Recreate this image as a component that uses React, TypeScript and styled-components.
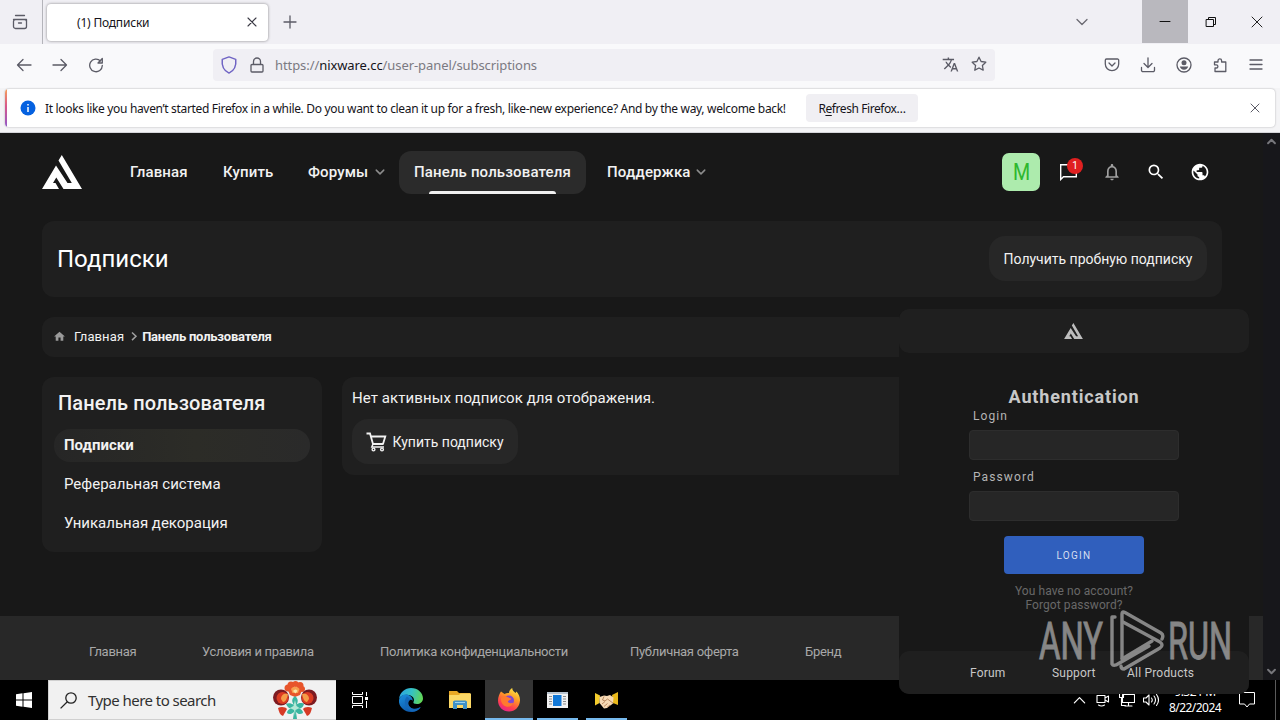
import React from "react";
import styled, { createGlobalStyle } from "styled-components";
import {
  MdHome,
  MdNotificationsNone,
  MdPublic,
  MdSearch,
  MdTranslate,
} from "react-icons/md";

const GlobalStyle = createGlobalStyle`
  * {
    box-sizing: border-box;
  }
  body {
    margin: 0;
    overflow: hidden;
    background: #000;
  }
  svg {
    display: block;
    flex: none;
  }
`;

const uiFont = `"Noto Sans", "Open Sans", sans-serif`;
const siteFont = `Roboto, "Liberation Sans", sans-serif`;

const Screen = styled.div`
  position: relative;
  display: flex;
  flex-direction: column;
  width: 1280px;
  height: 720px;
  overflow: hidden;
  white-space: nowrap;
  font-family: ${siteFont};
`;

/* ---------- browser ---------- */

const TabStrip = styled.div`
  display: flex;
  align-items: center;
  height: 44px;
  background: #f0eff4;
  font-family: ${uiFont};
  color: #15141a;
`;

const RecentButton = styled.div`
  display: flex;
  align-items: center;
  justify-content: center;
  width: 43px;
  height: 44px;
  padding-right: 3px;
  border-right: 1px solid #b4b4ba;
`;

const Tab = styled.div`
  display: flex;
  align-items: center;
  justify-content: space-between;
  width: 221px;
  height: 37px;
  margin-left: 4px;
  padding: 0 8px 0 30px;
  border-radius: 4px;
  background: #fff;
  box-shadow: 0 0 3px rgba(0, 0, 0, 0.45);
  font-size: 12px;
  letter-spacing: -0.2px;
`;

const NewTab = styled.div`
  margin-left: 14px;
`;

const WindowButtons = styled.div`
  display: flex;
  align-self: stretch;
  margin-left: auto;
`;

const WindowButton = styled.div<{ $active?: boolean; $width?: number }>`
  display: flex;
  align-items: center;
  justify-content: center;
  width: ${(p) => p.$width || 46}px;
  height: 43px;
  background: ${(p) => (p.$active ? "#b9b8be" : "transparent")};
`;

const NavBar = styled.div`
  display: flex;
  align-items: center;
  height: 44px;
  padding: 0 16px 3px;
  background: #f9f9fb;
`;

const NavButtons = styled.div`
  display: flex;
  gap: 20px;
  width: 197px;
`;

const UrlBar = styled.div`
  display: flex;
  align-items: center;
  width: 782px;
  height: 32px;
  padding: 0 8px 0 7px;
  border-radius: 4px;
  background: #f0eff4;
`;

const Url = styled.div`
  flex: 1;
  margin-left: 7px;
  font-family: ${uiFont};
  font-size: 13px;
  letter-spacing: -0.08px;
  color: #7b7a82;
  b {
    font-weight: 400;
    color: #15141a;
  }
`;

const UrlIcons = styled.div`
  display: flex;
  gap: 12px;
`;

const ToolIcons = styled.div`
  display: flex;
  gap: 20px;
  margin-left: auto;
`;

const NoticeBar = styled.div`
  height: 45px;
  padding: 1px 5px 0;
  background: #f4f4f6;
  border-bottom: 1px solid #d5d5d9;
`;

const Notice = styled.div`
  position: relative;
  display: flex;
  align-items: center;
  height: 38px;
  padding: 0 12px 0 15px;
  border-radius: 4px;
  overflow: hidden;
  background: #fff;
  box-shadow: 0 0 2px rgba(0, 0, 0, 0.3);
  font-family: ${uiFont};
  font-size: 12px;
  letter-spacing: -0.33px;
  color: #15141a;
  &::before {
    content: "";
    position: absolute;
    left: 0;
    top: 0;
    width: 2px;
    height: 100%;
    background: linear-gradient(#f5a05a, #d8578a 45%, #9059c8);
  }
`;

const NoticeText = styled.div`
  width: 742px;
  margin-left: 9px;
`;

const RefreshButton = styled.div`
  display: flex;
  align-items: center;
  justify-content: center;
  width: 112px;
  height: 28px;
  margin-left: 19px;
  border-radius: 4px;
  background: #f0eff3;
  letter-spacing: -0.42px;
  u {
    text-underline-offset: 2px;
  }
`;

const NoticeClose = styled.div`
  margin-left: auto;
`;

/* ---------- site ---------- */

const Viewport = styled.div`
  display: flex;
  height: 547px;
  background: #181818;
  color: #f2f2f2;
`;

const Page = styled.div`
  display: flex;
  flex-direction: column;
  width: 1263px;
`;

const Scrollbar = styled.div`
  display: flex;
  flex-direction: column;
  align-items: center;
  justify-content: space-between;
  width: 17px;
  padding: 3px 0;
  background: #17171b;
`;

const Header = styled.div`
  display: flex;
  align-items: center;
  height: 78px;
  padding: 0 41px 0 42px;
`;

const Menu = styled.div`
  display: flex;
  gap: 6px;
  margin-left: 33px;
`;

const MenuItem = styled.div<{ $width: number; $active?: boolean }>`
  position: relative;
  display: flex;
  align-items: center;
  justify-content: space-between;
  width: ${(p) => p.$width}px;
  height: 43px;
  padding: 0 7px 0 15px;
  border-radius: 12px;
  background: ${(p) => (p.$active ? "#2b2b2b" : "transparent")};
  font-size: 15px;
  font-weight: 500;
  letter-spacing: 0.14px;
  &::after {
    content: "";
    position: absolute;
    left: 30px;
    right: 30px;
    bottom: 0;
    height: 3px;
    border-radius: 3px 3px 0 0;
    background: ${(p) => (p.$active ? "#f0f0f0" : "transparent")};
  }
`;

const UserTools = styled.div`
  display: flex;
  align-items: center;
  margin-left: auto;
`;

const Avatar = styled.div`
  display: flex;
  align-items: center;
  justify-content: center;
  width: 38px;
  height: 38px;
  margin-right: 6px;
  border-radius: 7px;
  background: #adebad;
  color: #2eb82e;
  font-size: 24px;
`;

const AvatarLetter = styled.span`
  transform: scaleX(0.82);
`;

const ToolCell = styled.div<{ $dim?: boolean }>`
  position: relative;
  display: flex;
  align-items: center;
  justify-content: center;
  width: 44px;
  height: 38px;
  color: ${(p) => (p.$dim ? "#a0a0a0" : "#fff")};
`;

const Badge = styled.div`
  position: absolute;
  left: 21px;
  top: 5px;
  width: 16px;
  height: 16px;
  border-radius: 50%;
  background: #e02020;
  font-size: 10px;
  line-height: 16px;
  text-align: center;
  color: #fff;
`;

const Content = styled.div`
  display: flex;
  flex-direction: column;
  gap: 20px;
  flex: 1;
  padding: 10px 41px 0 42px;
`;

const Panel = styled.div`
  border-radius: 12px;
  background: #1f1f1f;
`;

const TitlePanel = styled(Panel)`
  display: flex;
  align-items: center;
  justify-content: space-between;
  height: 76px;
  padding: 0 15px 1px;
`;

const Title = styled.div`
  font-size: 24px;
  color: #fff;
`;

const DarkButton = styled.div<{ $width: number }>`
  display: flex;
  align-items: center;
  justify-content: center;
  gap: 5px;
  width: ${(p) => p.$width}px;
  height: 45px;
  border-radius: 16px;
  background: #272727;
  font-size: 14px;
`;

const Breadcrumb = styled(Panel)`
  display: flex;
  align-items: center;
  height: 40px;
  padding: 0 0 2px 11px;
  font-size: 13px;
  letter-spacing: 0.1px;
  b {
    letter-spacing: -0.22px;
  }
`;

const Columns = styled.div`
  display: flex;
  align-items: flex-start;
  gap: 20px;
`;

const Sidebar = styled(Panel)`
  width: 280px;
  height: 175px;
  padding: 12px;
`;

const SidebarTitle = styled.div`
  height: 40px;
  padding-left: 4px;
  font-size: 20px;
  line-height: 28px;
  font-weight: 500;
  letter-spacing: 0.1px;
`;

const SidebarLink = styled.div<{ $active?: boolean }>`
  height: 33px;
  margin-bottom: 6px;
  padding-left: 10px;
  border-radius: 16px;
  background: ${(p) =>
    p.$active ? "linear-gradient(90deg, #262626, #2c2c27 55%, #2a2a2a)" : "none"};
  font-size: 15px;
  line-height: 32px;
  font-weight: ${(p) => (p.$active ? 700 : 400)};
`;

const MainPanel = styled(Panel)`
  flex: 1;
  height: 98px;
  padding: 10px;
`;

const Message = styled.div`
  height: 32px;
  font-size: 15px;
  line-height: 22px;
  letter-spacing: 0.08px;
`;

const Footer = styled.div`
  display: flex;
  height: 64px;
  padding-left: 89px;
  background: #282828;
`;

const FooterLink = styled.div<{ $width: number }>`
  width: ${(p) => p.$width}px;
  font-size: 13px;
  line-height: 71px;
  letter-spacing: -0.3px;
  color: #a8a8a8;
`;

/* ---------- loader window ---------- */

const Loader = styled.div`
  position: absolute;
  left: 899px;
  top: 309px;
  display: flex;
  flex-direction: column;
  align-items: center;
  width: 350px;
  height: 385px;
  border-radius: 10px;
  background: #181818;
  color: #c8c8c8;
`;

const LoaderHeader = styled.div`
  display: flex;
  align-items: center;
  justify-content: center;
  width: 100%;
  height: 44px;
  padding-right: 2px;
  border-radius: 10px;
  background: #1f1f1f;
`;

const LoaderTitle = styled.div`
  margin-top: 33px;
  font-size: 18px;
  line-height: 22px;
  font-weight: 700;
  letter-spacing: 0.85px;
`;

const Field = styled.div`
  width: 210px;
  height: 61px;
`;

const FieldLabel = styled.div`
  height: 22px;
  padding-left: 4px;
  font-size: 12px;
  line-height: 17px;
  letter-spacing: 1.1px;
  color: #b5b5b5;
`;

const FieldBox = styled.div`
  height: 30px;
  border: 1px solid #2d2d2d;
  border-radius: 4px;
  background: #262626;
`;

const LoginButton = styled.div`
  width: 140px;
  height: 38px;
  margin-top: 6px;
  border-radius: 4px;
  background: #305fbd;
  font-size: 10px;
  line-height: 39px;
  text-align: center;
  letter-spacing: 1.3px;
  color: #d5def0;
`;

const LoaderHint = styled.div`
  margin-top: 10px;
  font-size: 12px;
  line-height: 14px;
  letter-spacing: 0.08px;
  text-align: center;
  color: #686868;
`;

const LoaderFooter = styled.div`
  display: flex;
  width: 100%;
  height: 43px;
  margin-top: auto;
  padding-left: 71px;
  border-radius: 10px;
  background: #1f1f1f;
  font-size: 12px;
  line-height: 44px;
  letter-spacing: 0.2px;
`;

const LoaderLink = styled.div<{ $width: number }>`
  width: ${(p) => p.$width}px;
`;

const Watermark = styled.div`
  position: absolute;
  left: 1036px;
  top: 608px;
  opacity: 0.55;
`;

/* ---------- taskbar ---------- */

const Taskbar = styled.div`
  display: flex;
  height: 40px;
  background: #000;
  font-family: ${uiFont};
`;

const StartButton = styled.div`
  display: flex;
  align-items: center;
  justify-content: center;
  width: 48px;
`;

const SearchBox = styled.div`
  display: flex;
  align-items: center;
  width: 288px;
  padding: 0 19px 0 11px;
  border: 1px solid #d0d0d0;
  border-right: 0;
  background: #f1f1f1;
  color: #303030;
  font-size: 15px;
  letter-spacing: -0.55px;
`;

const SearchHint = styled.div`
  flex: 1;
  margin-left: 11px;
`;

const TaskButton = styled.div<{ $open?: boolean; $active?: boolean; $width?: number }>`
  display: flex;
  align-items: center;
  justify-content: center;
  width: ${(p) => p.$width || 49}px;
  background: ${(p) => (p.$active ? "#343434" : "#000")};
  position: relative;
  &::after {
    content: "";
    position: absolute;
    left: ${(p) => (p.$active ? 0 : 4)}px;
    right: ${(p) => (p.$active ? 0 : 4)}px;
    bottom: 0;
    height: 2px;
    background: ${(p) => (p.$open ? "#76b9ed" : "transparent")};
  }
`;

const Tray = styled.div`
  display: flex;
  align-items: center;
  gap: 8px;
  margin-left: auto;
  padding-right: 4px;
  color: #fff;
`;

const Clock = styled.div`
  width: 56px;
  margin-right: 7px;
  font-size: 12px;
  line-height: 16px;
  text-align: center;
  letter-spacing: -0.55px;
`;

const ShowDesktop = styled.div`
  align-self: stretch;
  width: 1px;
  margin-left: 11px;
  background: #5a5a5a;
`;

type GlyphProps = {
  d: string;
  size?: number;
  color?: string;
  width?: number;
};

// stroke icon on a 16px grid
const Glyph = ({ d, size = 16, color = "#5b5b66", width = 1.3 }: GlyphProps) => (
  <svg width={size} height={size} viewBox="0 0 16 16" fill="none" stroke={color}
    strokeWidth={width} strokeLinecap="round" strokeLinejoin="round">
    <path d={d} />
  </svg>
);

const Logo = ({ width, height, color }: { width: number; height: number; color: string }) => (
  <svg width={width} height={height} viewBox="0 0 40 34" fill={color}>
    <path d="M19.800 0 40 34H21.500L14.300 22.500 11 28H13.500L17 34H0L14 10.500 25.500 28H29.800L16.500 5.500Z" />
  </svg>
);

const EdgeIcon = () => (
  <svg width="24" height="24" viewBox="0 0 24 24">
    <defs>
      <linearGradient id="edgeTop" x1="0" y1="0.3" x2="1" y2="0.5">
        <stop offset="0" stopColor="#2ba4e0" />
        <stop offset="0.5" stopColor="#35c1c5" />
        <stop offset="1" stopColor="#62d755" />
      </linearGradient>
      <linearGradient id="edgeLow" x1="0" y1="0" x2="0.6" y2="1">
        <stop offset="0" stopColor="#1b8fdd" />
        <stop offset="1" stopColor="#0c56a8" />
      </linearGradient>
    </defs>
    <path d="M0 11C1 4 6 0 12 0c7 0 12 5 12 10.500c0 3.500-3 5.500-6 5.500-3 0-4-1-3.500-2 1-1.500.8-5-3-6.500C7 6 2 7 0 11Z" fill="url(#edgeTop)" />
    <path d="M0 12c1-4.500 5.500-6.500 9.500-5 3 1.200 4.500 3.500 4.200 5.800-.7-.8-1.700-1.200-2.700-.8-2 1-2.500 4-.5 6.500 2 2.600 6 3.500 11 .5-2.500 4-6 5-9.500 5C5 24-.8 18 0 12Z" fill="url(#edgeLow)" />
    <path d="M8 8.500c-3 3-3 9 1 12.500 2 1.800 4 2.700 6 2.600 3-.5 5.500-2.200 6.800-4.600-4.800 2.800-9.300 2.200-11.600-.8C8.500 16 9 13 11 12c-.5-1.500-1.600-2.800-3-3.500Z" fill="#1468b8" />
  </svg>
);

const ExplorerIcon = () => (
  <svg width="22" height="20" viewBox="0 0 22 20">
    <path d="M0 1h8l2 2h11v15H0Z" fill="#e9a825" />
    <path d="M0 5h10l1.500-1.500H22V18H0Z" fill="#fcd866" />
    <path d="M4 19v-7.500l1.500-1h11l1.500 1V19h-4v-4H8v4Z" fill="#3f92c8" />
    <path d="M6 12.500h10" stroke="#9ad3f2" />
  </svg>
);

const FirefoxIcon = () => (
  <svg width="24" height="24" viewBox="0 0 24 24">
    <defs>
      <linearGradient id="fox" x1="0.8" y1="0" x2="0.3" y2="1">
        <stop offset="0" stopColor="#fff04a" />
        <stop offset="0.4" stopColor="#ff9a26" />
        <stop offset="0.75" stopColor="#ff3f4e" />
        <stop offset="1" stopColor="#e6238e" />
      </linearGradient>
    </defs>
    <path d="M4 3.500 7.500 6C9 5 10.500 4.800 12 5c0-2 1.200-4 3.200-5 0 2.500 2 3.500 3.300 5l1-1.500c2 2.300 3.700 5.500 3.500 9C22.600 19 18 23.500 12 23.500S1 19 1 12.500C1 9 2.500 5.500 4 3.500Z" fill="url(#fox)" />
    <circle cx="12" cy="12.500" r="5" fill="#8047d2" />
    <path d="M4 10c2-2.500 5-2 7-.8 1.500 1 3 1 3.500 1.500-.5 1.300-3 1.300-3.500 2.500s1.500 2.600 5.200 1.600C15 18 12 19.500 9 18.500 5.500 17.500 3.500 14 4 10Z" fill="#ff7a2e" />
  </svg>
);

const AppIcon = () => (
  <svg width="21" height="16" viewBox="0 0 21 16">
    <path d="M0 0h21v16H0Z" fill="#f1f1f1" />
    <path d="M0 0h21v2H0Z" fill="#b9c4cf" />
    <path d="M2 4.500h3M2 7h3M2 9.500h3M2 12h3M16 4.500h3M16 7h3M16 9.500h3M16 12h3" stroke="#8b8b8b" />
    <path d="M6 3h8.500v11H6Z" fill="#1279d8" />
  </svg>
);

const HandshakeIcon = () => (
  <svg width="23" height="17" viewBox="0 0 23 17">
    <path d="M0 1 5 3.500 4.500 11 0 13.500Z" fill="#f4cc2c" />
    <path d="M23 0 17 3l1 8 5 2Z" fill="#e9b91c" />
    <path d="M4.500 5 9 3.500 12 4l3-1 3.500 2.500-.5 6-6 4.500-3 .5L4.500 11Z" fill="#f6d9b4" />
    <path d="M9 4.500 7.500 8 10 9l2.500-2 6 4.500M7 12l3-2.500M9 14.500l3.500-3M12 15.500l3-2.500" fill="none" stroke="#a8744a" strokeWidth="0.8" />
  </svg>
);

const FlowerIcon = () => (
  <svg width="44" height="38" viewBox="0 0 44 38">
    <g fill="#e8552b">
      <circle cx="15" cy="7" r="3.500" />
      <circle cx="18" cy="4" r="3.500" />
      <circle cx="22.500" cy="3" r="3" />
      <circle cx="27" cy="4.500" r="3.500" />
      <circle cx="29" cy="8" r="3" />
      <path d="M14 7h16l-3 7-5 2-5-2Z" />
    </g>
    <path d="M18 8c2-3 6-3 8.500 0L25 12h-5.500Z" fill="#f7a04f" />
    <path d="M20 10c1.500-2 3.500-2 4.500 0l-2 2.500Z" fill="#fbe3a8" />
    <circle cx="8" cy="16.500" r="8" fill="#7d1b21" />
    <circle cx="36" cy="16.500" r="8" fill="#7d1b21" />
    <circle cx="9.500" cy="17" r="6" fill="#dc3b22" />
    <circle cx="34.500" cy="17" r="6" fill="#dc3b22" />
    <path d="M8 18c0-4 3-6 7-5-1 4-2 8-5 8Z" fill="#f59c47" />
    <path d="M36 18c0-4-3-6-7-5 1 4 2 8 5 8Z" fill="#f59c47" />
    <path d="M5 27c3-2 8-1 9 1l-4 7c-3-1-4-4-5-8Z" fill="#d63a26" />
    <path d="M39 27c-3-2-8-1-9 1l4 7c3-1 4-4 5-8Z" fill="#d63a26" />
    <path d="M22 15c4 3 3 7 1 9 3-3 7-2 8-1-1 4-4 5-7 5 3-1 6 1 6 4-3 2-5 1-7-1l1 7h-4l1-7c-2 2-5 3-7 1 0-3 3-5 6-4-3 0-6-2-7-5 2-1 5-1 8 1-2-3-3-6 1-9Z" fill="#3ab5a0" />
    <path d="m22 19 1.500 6 3 2-4 2-.5 6-1-6-4-2 3.500-2Z" fill="#b5e8d6" />
  </svg>
);

const CartIcon = () => (
  <svg width="21" height="20" viewBox="0 0 21 20" fill="none" stroke="#f2f2f2" strokeWidth="1.800">
    <path d="M.5 1.500H4L7 12h10.500M4.800 4.500h14.500L17 12" />
    <path d="M7 12 5.800 15H18" strokeWidth="1.500" />
    <circle cx="7.500" cy="17.500" r="1.400" strokeWidth="1.400" />
    <circle cx="16" cy="17.500" r="1.400" strokeWidth="1.400" />
  </svg>
);

const cross = "M4 4l8 8M12 4l-8 8";
const chevronDown = "M3 5.500l5 5 5-5";

const footerLinks = [
  { label: "Главная", width: 113 },
  { label: "Условия и правила", width: 178 },
  { label: "Политика конфиденциальности", width: 250 },
  { label: "Публичная оферта", width: 175 },
  { label: "Бренд", width: 60 },
];

function Browser() {
  return (
    <>
      <TabStrip>
        <RecentButton>
          <Glyph d="M1.500 5.500h13v7a2 2 0 0 1-2 2h-9a2 2 0 0 1-2-2v-5a2 2 0 0 1 2-2M3.500 1.500h9M14.500 7.500a2 2 0 0 0-2-2M6.500 9h3" />
        </RecentButton>
        <Tab>
          (1) Подписки
          <Glyph d={cross} color="#3a3944" width={1.1} />
        </Tab>
        <NewTab>
          <Glyph d="M8 2v12M2 8h12" />
        </NewTab>
        <WindowButtons>
          <WindowButton $width={120}>
            <Glyph d={chevronDown} color="#6b6a72" />
          </WindowButton>
          <WindowButton $active>
            <Glyph d="M3 7.500h10" color="#111" width={1} />
          </WindowButton>
          <WindowButton>
            <Glyph d="M3.500 5.500h7v7h-7zM5.500 5.500v-2h7v7h-2" color="#111" width={1} />
          </WindowButton>
          <WindowButton>
            <Glyph d="M3 3l10 10M13 3L3 13" color="#222" width={1} />
          </WindowButton>
        </WindowButtons>
      </TabStrip>

      <NavBar>
        <NavButtons>
          <Glyph d="M15 8H1.500M7 2.500L1.500 8 7 13.500" />
          <Glyph d="M1 8h13.500M9 2.500L14.500 8 9 13.500" />
          <Glyph d="M14.300 8.500A6.300 6.300 0 1 1 12.500 4M14.300 1.500V6H10z" />
        </NavButtons>
        <UrlBar>
          <Glyph d="M8 .8l6 2.200c.6 5.500-1.200 10-6 12.200C3.200 13 1.400 8.500 2 3z" size={18} color="#6f63c4" />
          <svg width="30" height="16" viewBox="-11 0 30 16" fill="none" stroke="#5b5b66" strokeWidth="1.300">
            <path d="M3 7.500h10a1 1 0 0 1 1 1v5.500a1 1 0 0 1-1 1H3a1 1 0 0 1-1-1V8.500a1 1 0 0 1 1-1ZM4.500 7.500V4.500a3.500 3.500 0 0 1 7 0v3" />
          </svg>
          <Url>
            https://<b>nixware.cc</b>/user-panel/subscriptions
          </Url>
          <UrlIcons>
            <MdTranslate size={17} color="#5b5b66" />
            <Glyph d="M8 1.200l2.100 4.300 4.700.7-3.400 3.300.8 4.700L8 12l-4.200 2.200.8-4.700L1.200 6.200l4.700-.7z" />
          </UrlIcons>
        </UrlBar>
        <ToolIcons>
          <Glyph d="M2.500 2h11a1.200 1.200 0 0 1 1.200 1.200V7a6.700 6.700 0 0 1-13.400 0V3.200A1.200 1.200 0 0 1 2.500 2ZM5 6l3 3 3-3" />
          <Glyph d="M8 .8v9.400M4 6.500l4 4 4-4M1.500 10.500v2.700a1.500 1.500 0 0 0 1.500 1.500h10a1.500 1.500 0 0 0 1.500-1.500v-2.700" />
          <svg width="16" height="16" viewBox="0 0 16 16" fill="#5b5b66">
            <circle cx="8" cy="8" r="7" fill="none" stroke="#5b5b66" strokeWidth="1.300" />
            <circle cx="8" cy="5.800" r="2.500" />
            <path d="M3.800 9.500h8.400c-.5 2-2 3.200-4.200 3.200s-3.700-1.200-4.200-3.200Z" />
          </svg>
          <Glyph d="M6 3.700a1.800 1.800 0 1 1 3.600 0V5h4.200v9.500H3V11h1.300a1.600 1.600 0 1 0 0-3.200H2.500V5H6z" />
          <Glyph d="M2 3h12M2 7.500h12M2 12h12" />
        </ToolIcons>
      </NavBar>

      <NoticeBar>
        <Notice>
          <svg width="16" height="16" viewBox="0 0 16 16">
            <circle cx="8" cy="8" r="7.500" fill="#0561e0" />
            <path d="M8 7v5M8 4v1.500" stroke="#fff" strokeWidth="1.500" />
          </svg>
          <NoticeText>
            It looks like you haven’t started Firefox in a while. Do you want to clean it up for a fresh, like-new
            experience? And by the way, welcome back!
          </NoticeText>
          <RefreshButton>
            R<u>e</u>fresh Firefox…
          </RefreshButton>
          <NoticeClose>
            <Glyph d={cross} width={1} />
          </NoticeClose>
        </Notice>
      </NoticeBar>
    </>
  );
}

function Site() {
  return (
    <Viewport>
      <Page>
        <Header>
          <Logo width={40} height={34} color="#fff" />
          <Menu>
            <MenuItem $width={87}>Главная</MenuItem>
            <MenuItem $width={79}>Купить</MenuItem>
            <MenuItem $width={100}>
              Форумы
              <Glyph d={chevronDown} size={12} color="#8c8c8c" width={2} />
            </MenuItem>
            <MenuItem $width={187} $active>
              Панель пользователя
            </MenuItem>
            <MenuItem $width={122}>
              Поддержка
              <Glyph d={chevronDown} size={12} color="#8c8c8c" width={2} />
            </MenuItem>
          </Menu>
          <UserTools>
            <Avatar>
              <AvatarLetter>M</AvatarLetter>
            </Avatar>
            <ToolCell>
              <svg width="17" height="17" viewBox="0 0 17 17" fill="none" stroke="#fff" strokeWidth="1.400">
                <path d="M.7 15.500V.7h15.600v12.100H3.500z" />
              </svg>
              <Badge>1</Badge>
            </ToolCell>
            <ToolCell $dim>
              <MdNotificationsNone size={20} />
            </ToolCell>
            <ToolCell>
              <MdSearch size={20} />
            </ToolCell>
            <ToolCell>
              <MdPublic size={20} />
            </ToolCell>
          </UserTools>
        </Header>

        <Content>
          <TitlePanel>
            <Title>Подписки</Title>
            <DarkButton $width={218}>Получить пробную подписку</DarkButton>
          </TitlePanel>
          <Breadcrumb>
            <MdHome size={13} color="#9a9a9a" />
            <span style={{ marginLeft: 8 }}>Главная</span>
            <svg width="18" height="12" viewBox="0 0 18 12" fill="none" stroke="#a0a0a0" strokeWidth="1.500">
              <path d="m8 2.500 4 3.800-4 3.800" />
            </svg>
            <b>Панель пользователя</b>
          </Breadcrumb>
          <Columns>
            <Sidebar>
              <SidebarTitle>Панель пользователя</SidebarTitle>
              <SidebarLink $active>Подписки</SidebarLink>
              <SidebarLink>Реферальная система</SidebarLink>
              <SidebarLink>Уникальная декорация</SidebarLink>
            </Sidebar>
            <MainPanel>
              <Message>Нет активных подписок для отображения.</Message>
              <DarkButton $width={166}>
                <CartIcon />
                Купить подписку
              </DarkButton>
            </MainPanel>
          </Columns>
        </Content>

        <Footer>
          {footerLinks.map((link) => (
            <FooterLink key={link.label} $width={link.width}>
              {link.label}
            </FooterLink>
          ))}
        </Footer>
      </Page>
      <Scrollbar>
        <Glyph d="M3 10.500l5-5 5 5" size={11} color="#77777c" width={2.8} />
        <Glyph d={chevronDown} size={11} color="#77777c" width={2.8} />
      </Scrollbar>
    </Viewport>
  );
}

function LoaderWindow() {
  return (
    <Loader>
      <LoaderHeader>
        <Logo width={19} height={16} color="#bdbdbd" />
      </LoaderHeader>
      <LoaderTitle>Authentication</LoaderTitle>
      <Field>
        <FieldLabel>Login</FieldLabel>
        <FieldBox />
      </Field>
      <Field>
        <FieldLabel>Password</FieldLabel>
        <FieldBox />
      </Field>
      <LoginButton>LOGIN</LoginButton>
      <LoaderHint>
        You have no account?
        <br />
        Forgot password?
      </LoaderHint>
      <LoaderFooter>
        <LoaderLink $width={82}>Forum</LoaderLink>
        <LoaderLink $width={75}>Support</LoaderLink>
        <LoaderLink $width={70}>All Products</LoaderLink>
      </LoaderFooter>
    </Loader>
  );
}

function WindowsTaskbar() {
  return (
    <Taskbar>
      <StartButton>
        <svg width="16" height="16" viewBox="0 0 16 16" fill="#fff">
          <path d="M0 2.200 6.500 1.300V7.500H0ZM7.500 1.200 16 0v7.500H7.500ZM0 8.500h6.500v6.200L0 13.800ZM7.500 8.500H16V16l-8.500-1.200Z" />
        </svg>
      </StartButton>
      <SearchBox>
        <svg width="17" height="17" viewBox="0 0 17 17" fill="none" stroke="#222" strokeWidth="1.300">
          <circle cx="11" cy="6" r="5.200" />
          <path d="M7.300 9.700.6 16.400" />
        </svg>
        <SearchHint>Type here to search</SearchHint>
        <FlowerIcon />
      </SearchBox>
      <TaskButton $width={48}>
        <svg width="16" height="16" viewBox="0 0 16 16" fill="none" stroke="#fff">
          <path d="M.5 0v2.500h10V0M.5 4.500h10v7H.5zM.5 16v-2.500h10V16M14.500 0v4M14.500 9v7" />
          <path d="M13 5h3v3h-3z" fill="#fff" stroke="none" />
        </svg>
      </TaskButton>
      <TaskButton $width={53}>
        <EdgeIcon />
      </TaskButton>
      <TaskButton $width={45}>
        <ExplorerIcon />
      </TaskButton>
      <TaskButton $width={3} />
      <TaskButton $width={48} $active $open>
        <FirefoxIcon />
      </TaskButton>
      <TaskButton $width={49} $open>
        <AppIcon />
      </TaskButton>
      <TaskButton $width={49} $open>
        <HandshakeIcon />
      </TaskButton>
      <Tray>
        <Glyph d="M2.500 10.500L8 5l5.500 5.500" color="#fff" size={15} width={1.3} />
        <Glyph d="M2 3.500h8v7H2zM10 6l3.500-2v6L10 8M3.500 13q3 2 6 0" color="#fff" width={1.1} />
        <Glyph d="M3.500 2.500h12v8h-12zM.5 1.500h4v4h-4zM2.500 5.500v8h4M9.500 10.500v3M6 14h7" color="#fff" width={1.1} />
        <Glyph d="M.5 6h2.500l3-3v10l-3-3H.5zM8.500 6q1.500 2 0 4M11 4q3 4 0 8M13.500 2.500q4 5.500 0 11" color="#fff" width={1.1} />
        <Clock>
          9:32 PM
          <br />
          8/22/2024
        </Clock>
        <svg width="18" height="16" viewBox="0 0 18 16" fill="none" stroke="#fff">
          <path d="M1.500.5h15v11.500h-5l-2.500 3-2.500-3h-5z" />
        </svg>
        <ShowDesktop />
      </Tray>
    </Taskbar>
  );
}

export default function App() {
  return (
    <Screen>
      <GlobalStyle />
      <Browser />
      <Site />
      <WindowsTaskbar />
      <LoaderWindow />
      <Watermark>
        <svg width="204" height="66" viewBox="0 0 204 66">
          <g fill="#e0e0e0" stroke="#e0e0e0" strokeWidth="0.9" fontFamily="Roboto, sans-serif" fontSize="52">
            <text x="3" y="51" textLength="64" lengthAdjust="spacingAndGlyphs">ANY</text>
            <text x="132" y="51" textLength="64" lengthAdjust="spacingAndGlyphs">RUN</text>
          </g>
          <g fill="none" stroke="#e0e0e0" strokeWidth="3.400" strokeLinejoin="round" strokeLinecap="round">
            <path d="M79 9H76V56Q77 58 80 57L113 38" />
            <path d="M86 50V6Q86 3 89 4.500L125 25Q128 27 126 31" />
            <path d="M87 14 124 34Q128 37 124 40L88 61Q85 61 85 58" />
            <path d="M86 51 116 33" />
          </g>
        </svg>
      </Watermark>
    </Screen>
  );
}
